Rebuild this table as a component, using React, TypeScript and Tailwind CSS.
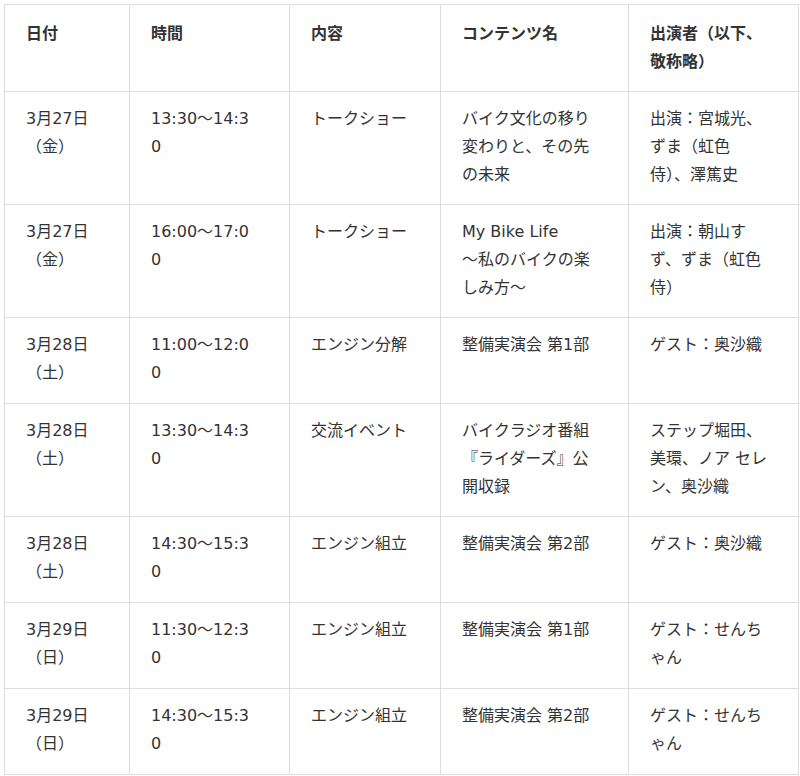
type Row = {
  date: string[];
  time: string[];
  kind: string;
  title: string[];
  cast: string[];
};

const rows: Row[] = [
  {
    date: ["3月27日", "（金）"],
    time: ["13:30〜14:3", "0"],
    kind: "トークショー",
    title: ["バイク文化の移り", "変わりと、その先", "の未来"],
    cast: ["出演：宮城光、", "ずま（虹色", "侍）、澤篤史"],
  },
  {
    date: ["3月27日", "（金）"],
    time: ["16:00〜17:0", "0"],
    kind: "トークショー",
    title: ["My Bike Life", "〜私のバイクの楽", "しみ方〜"],
    cast: ["出演：朝山す", "ず、ずま（虹色", "侍）"],
  },
  {
    date: ["3月28日", "（土）"],
    time: ["11:00〜12:0", "0"],
    kind: "エンジン分解",
    title: ["整備実演会 第1部"],
    cast: ["ゲスト：奥沙織"],
  },
  {
    date: ["3月28日", "（土）"],
    time: ["13:30〜14:3", "0"],
    kind: "交流イベント",
    title: ["バイクラジオ番組", "『ライダーズ』公", "開収録"],
    cast: ["ステップ堀田、", "美環、ノア セレ", "ン、奥沙織"],
  },
  {
    date: ["3月28日", "（土）"],
    time: ["14:30〜15:3", "0"],
    kind: "エンジン組立",
    title: ["整備実演会 第2部"],
    cast: ["ゲスト：奥沙織"],
  },
  {
    date: ["3月29日", "（日）"],
    time: ["11:30〜12:3", "0"],
    kind: "エンジン組立",
    title: ["整備実演会 第1部"],
    cast: ["ゲスト：せんち", "ゃん"],
  },
  {
    date: ["3月29日", "（日）"],
    time: ["14:30〜15:3", "0"],
    kind: "エンジン組立",
    title: ["整備実演会 第2部"],
    cast: ["ゲスト：せんち", "ゃん"],
  },
];

function Lines({ lines }: { lines: string[] }) {
  return (
    <>
      {lines.map((l, i) => (
        <span key={i} className="block">
          {l}
        </span>
      ))}
    </>
  );
}

const th =
  "border border-[#dddddd] px-[21px] pt-[15px] pb-[15px] text-left align-top font-bold whitespace-nowrap";
const td =
  "border border-[#dddddd] px-[21px] pt-[13px] pb-[15px] text-left align-top whitespace-nowrap";

export default function App() {
  return (
    <div
      className="min-h-screen bg-white pl-[4px] pt-[4px] text-[16px] leading-[28px] text-[#333333]"
      style={{ fontFamily: '"DejaVu Sans", "Noto Sans CJK JP", sans-serif' }}
    >
      <table className="w-[794px] table-fixed border-collapse">
        <colgroup>
          <col className="w-[125px]" />
          <col className="w-[160px]" />
          <col className="w-[151px]" />
          <col className="w-[188px]" />
          <col className="w-[170px]" />
        </colgroup>
        <thead>
          <tr>
            <th className={th}>日付</th>
            <th className={th}>時間</th>
            <th className={th}>内容</th>
            <th className={th}>コンテンツ名</th>
            <th className={th}>
              <Lines lines={["出演者（以下、", "敬称略）"]} />
            </th>
          </tr>
        </thead>
        <tbody>
          {rows.map((r, i) => (
            <tr key={i} className="h-[86px]">
              <td className={td}>
                <Lines lines={r.date} />
              </td>
              <td className={td}>
                <Lines lines={r.time} />
              </td>
              <td className={td}>{r.kind}</td>
              <td className={td}>
                <Lines lines={r.title} />
              </td>
              <td className={td}>
                <Lines lines={r.cast} />
              </td>
            </tr>
          ))}
        </tbody>
      </table>
    </div>
  );
}
